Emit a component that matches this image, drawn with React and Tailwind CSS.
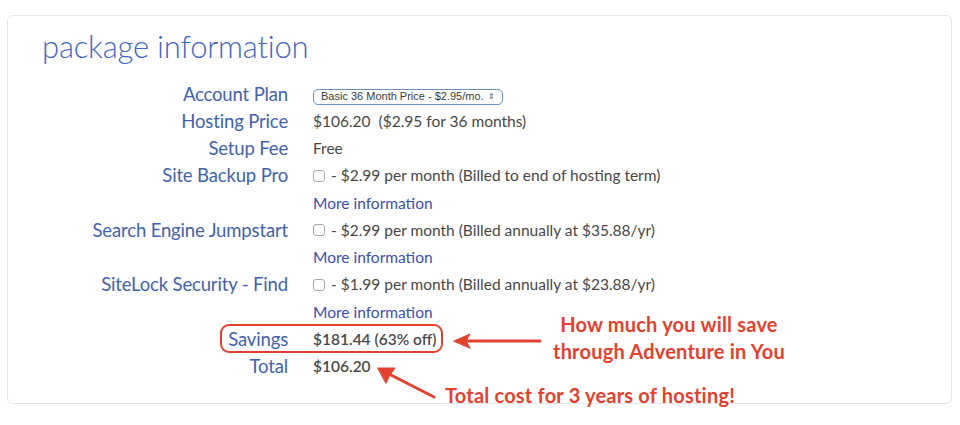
import React from 'react';

const rows = [
  { label: 'Account Plan', value: 'select' },
  { label: 'Hosting Price', value: '$106.20  ($2.95 for 36 months)' },
  { label: 'Setup Fee', value: 'Free' },
  { label: 'Site Backup Pro', value: 'check', text: ' - $2.99 per month (Billed to end of hosting term)' },
  { label: '', value: 'link' },
  { label: 'Search Engine Jumpstart', value: 'check', text: ' - $2.99 per month (Billed annually at $35.88/yr)' },
  { label: '', value: 'link' },
  { label: 'SiteLock Security - Find', value: 'check', text: ' - $1.99 per month (Billed annually at $23.88/yr)' },
  { label: '', value: 'link' },
  { label: 'Savings', value: '$181.44 (63% off)', strong: true, boxed: true },
  { label: 'Total', value: '$106.20', strong: true },
];

function Value({ row }) {
  if (row.value === 'select') {
    return (
      <span className="inline-flex items-center h-[16px] px-[7px] rounded-[5px] border border-[#6d8fc4] text-[11px] leading-none text-[#3a3a3a] font-['Liberation_Sans',sans-serif]">
        Basic 36 Month Price - $2.95/mo.
        <span className="ml-[4px] text-[8px] leading-none text-[#555]">&#8661;</span>
      </span>
    );
  }
  if (row.value === 'check') {
    return (
      <span className="inline-flex items-center">
        <span className="inline-block w-[12px] h-[12px] rounded-[3px] border border-[#a5aab0] bg-white mr-[2px]" />
        <span className="whitespace-pre">{row.text}</span>
      </span>
    );
  }
  if (row.value === 'link') {
    return <a className="text-[#3b4fb0]">More information</a>;
  }
  return (
    <span className={row.strong ? 'whitespace-pre font-semibold text-[#4a4a4a]' : 'whitespace-pre'}>
      {row.value}
    </span>
  );
}

export default function App() {
  return (
    <div className="relative w-[960px] h-[425px] bg-white overflow-hidden pt-[15px] pl-[7px] font-['Lato',sans-serif]">
      <div className="relative w-[945px] h-[389px] rounded-[6px] border border-[#dfe6ee] pl-[34px] pt-[12px]">
        <h1 className="text-[31px] leading-[36px] font-light text-[#3f66c2] tracking-[-0.2px]">
          package information
        </h1>

        <div className="mt-[17px] grid grid-cols-[246px_1fr] gap-x-[25px] leading-[27px]">
          {rows.map((row, i) => (
            <React.Fragment key={i}>
              <div className="relative text-right text-[18.5px] font-normal text-[#4163ab] whitespace-nowrap tracking-[-0.15px]">
                {row.boxed && (
                  <div className="absolute right-[-155px] top-[-2px] w-[223px] h-[29px] rounded-[9px] border-2 border-[#e2412e]" />
                )}
                {row.label}
              </div>
              <div className="text-[15.5px] text-[#474747] whitespace-nowrap">
                <Value row={row} />
              </div>
            </React.Fragment>
          ))}
        </div>
      </div>

      {/* callouts */}
      <div className="absolute left-[553px] top-[311px] text-[20px] leading-[27px] font-bold text-[#e2412e] text-center tracking-[0.2px]">
        <div>How much you will save</div>
        <div>through Adventure in You</div>
      </div>
      <div className="absolute left-[445px] top-[382px] text-[20px] leading-[27px] font-bold text-[#e2412e] tracking-[0.2px]">
        Total cost for 3 years of hosting!
      </div>

      <svg className="absolute left-0 top-0 pointer-events-none" width="960" height="425">
        <g stroke="#e2412e" strokeWidth="3" strokeLinecap="round" fill="#e2412e">
          <line x1="540" y1="341" x2="462" y2="341" />
          <polygon points="454,341 470,334 466,341 470,348" strokeWidth="1" />
          <line x1="434" y1="397" x2="387" y2="373" />
          <polygon points="378,368 395,368 390,375 386,383" strokeWidth="1" />
        </g>
      </svg>
    </div>
  );
}
